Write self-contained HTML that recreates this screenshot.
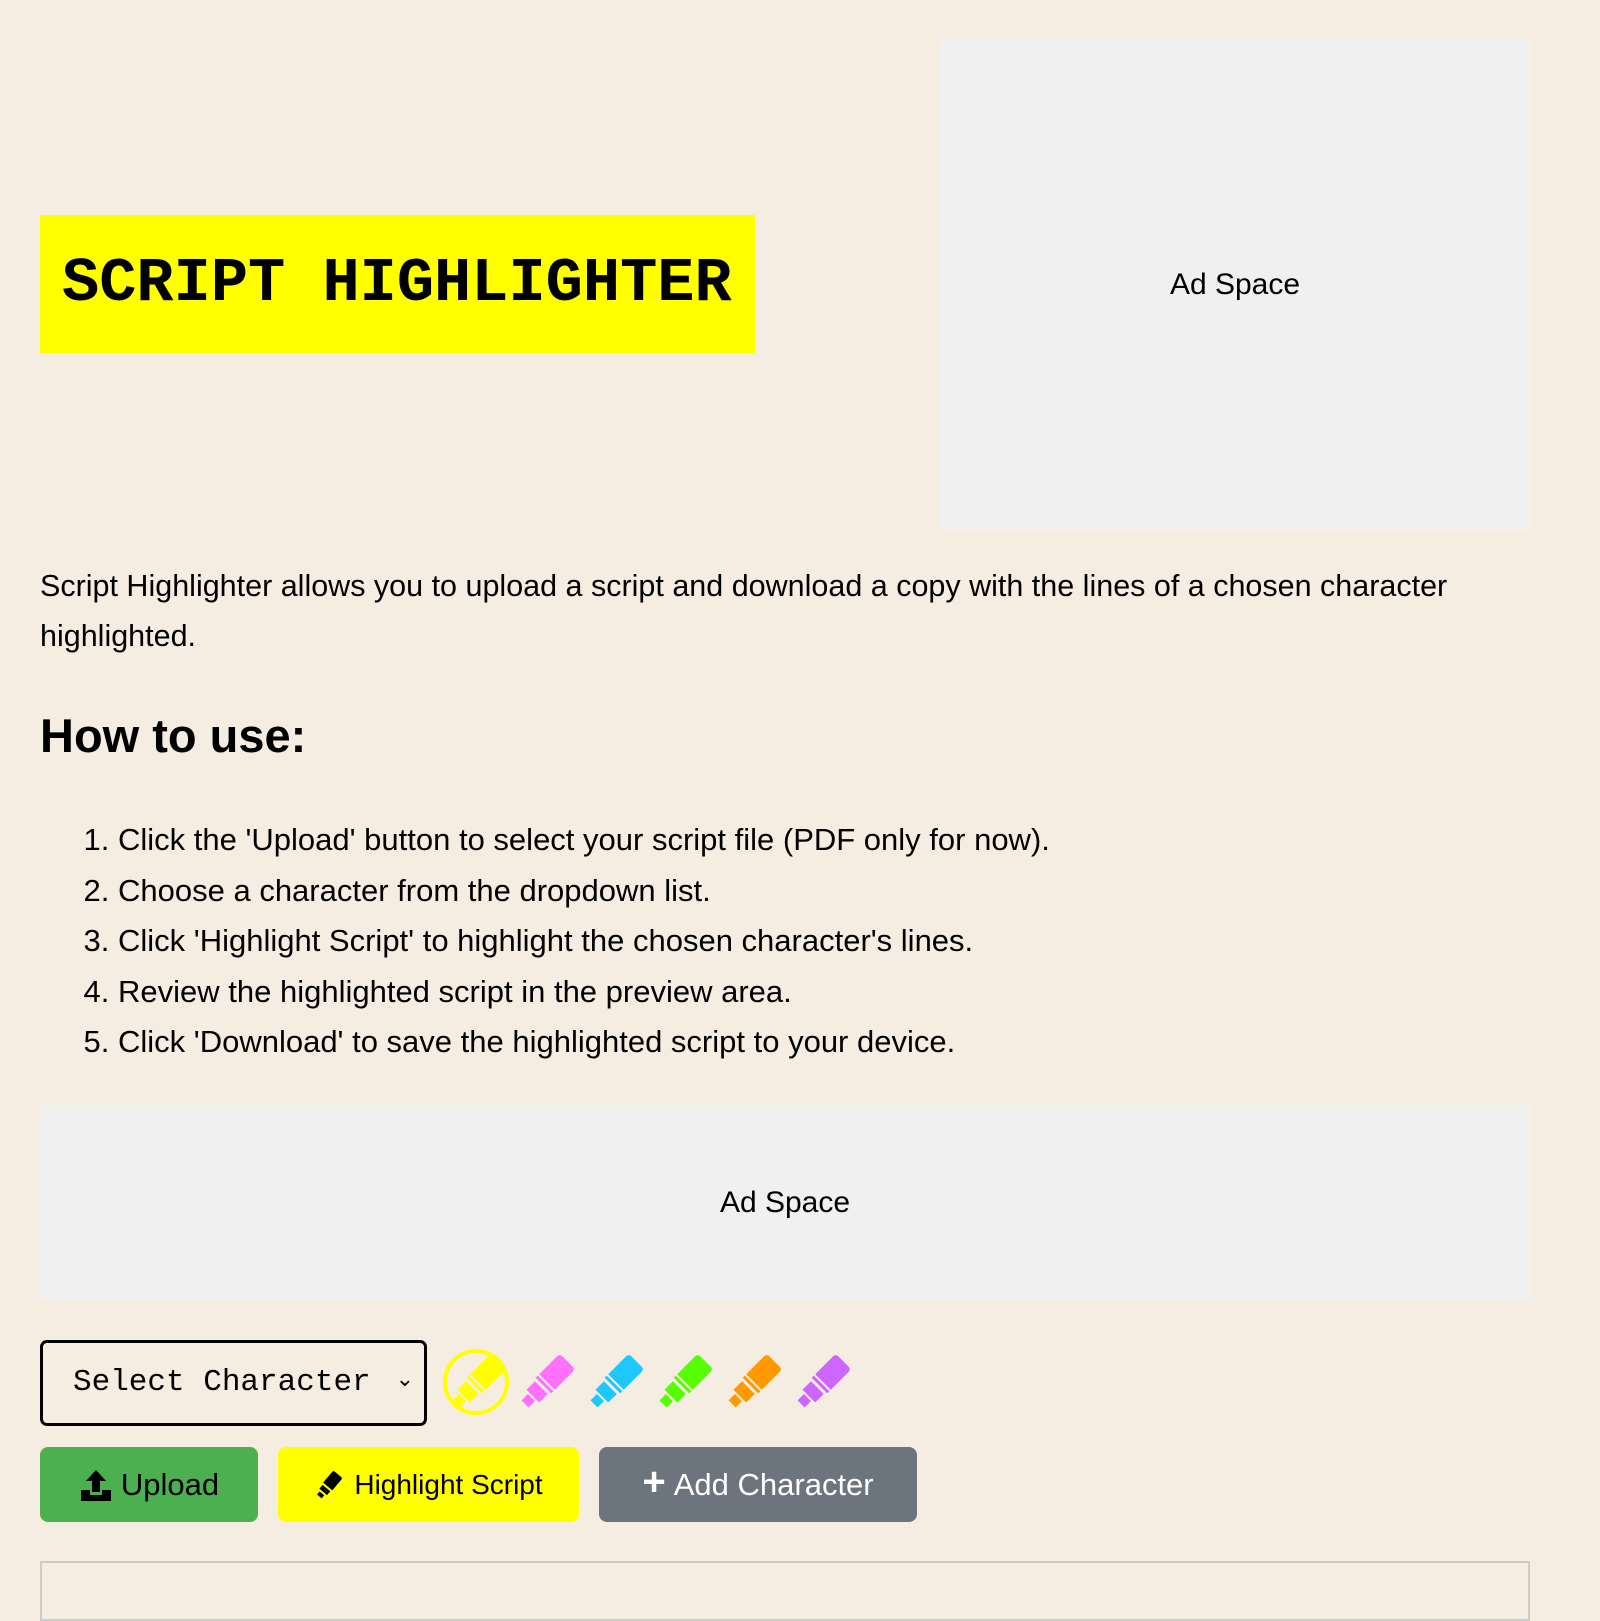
<!DOCTYPE html>
<html><head><style>
body{margin:0;background:#f5ede2;font-family:"Liberation Sans",sans-serif;color:#000;width:1600px;height:1600px;overflow:hidden;position:relative}
.a{position:absolute}
.ad{background:#f0f0f0;display:flex;align-items:center;justify-content:center;font-size:30px}
.btn{position:absolute;top:1447px;height:75px;border-radius:8px;display:flex;align-items:center;justify-content:center;font-size:31px}
li{height:50.5px;line-height:50.5px}
</style></head><body>
<div class="a" style="left:40px;top:215px;width:715px;height:138px;background:#ffff00;font-family:'Liberation Mono',monospace;font-weight:bold;font-size:62px;line-height:138px;padding-left:22px;box-sizing:border-box;white-space:nowrap">SCRIPT HIGHLIGHTER</div>
<div class="a ad" style="left:940px;top:40px;width:590px;height:490px">Ad Space</div>
<div class="a" style="left:40px;top:561px;width:1480px;font-size:30.5px;line-height:50px">Script Highlighter allows you to upload a script and download a copy with the lines of a chosen character highlighted.</div>
<div class="a" style="left:40px;top:708px;font-size:47px;font-weight:bold">How to use:</div>
<ol class="a" style="left:40px;top:815px;margin:0;padding-left:78px;font-size:31px">
<li>Click the 'Upload' button to select your script file (PDF only for now).</li>
<li>Choose a character from the dropdown list.</li>
<li>Click 'Highlight Script' to highlight the chosen character's lines.</li>
<li>Review the highlighted script in the preview area.</li>
<li>Click 'Download' to save the highlighted script to your device.</li>
</ol>
<div class="a ad" style="left:40px;top:1105px;width:1490px;height:195px">Ad Space</div>
<div class="a" style="left:40px;top:1340px;width:387px;height:86px;border:3px solid #000;border-radius:7px;box-sizing:border-box;font-family:'Liberation Mono',monospace;font-size:31px;line-height:80px;padding-left:30px;white-space:nowrap">Select Character<span style="position:absolute;right:10px;top:-4px;font-family:'Liberation Sans';font-size:22px">&#8964;</span></div>
<svg class="a" style="left:440px;top:1345px" width="420" height="75" viewBox="0 0 420 75">
<circle cx="36" cy="37" r="31" fill="none" stroke="#ffff00" stroke-width="4"/>
<defs><g id="h"><path d="M0 -11 L25 -11 Q29 -11 29 -7 L29 7 Q29 11 25 11 L0 11 Z"/><path d="M-5 -11 L-2 -11 L-2 11 L-5 11Z"/><path d="M-20 -9 L-8 -9 L-8 9 L-20 9 Z"/><path d="M-31 -5 L-22 -5 L-22 5 L-31 5Z"/></g></defs>
<g fill="#ffff00" transform="translate(38,37) rotate(-45)"><use href="#h"/></g>
<g fill="#ff70ff" transform="translate(107,37) rotate(-45)"><use href="#h"/></g>
<g fill="#1ec8ff" transform="translate(176,37) rotate(-45)"><use href="#h"/></g>
<g fill="#55ff00" transform="translate(245,37) rotate(-45)"><use href="#h"/></g>
<g fill="#ff9900" transform="translate(314,37) rotate(-45)"><use href="#h"/></g>
<g fill="#cc66ff" transform="translate(383,37) rotate(-45)"><use href="#h"/></g>
</svg>
<div class="btn" style="left:40px;width:218px;background:#4caf50"><svg width="34" height="34" viewBox="0 0 34 34" style="margin-right:8px"><path d="M17 2 L27 13 L21 13 L21 24 L13 24 L13 13 L7 13Z M2 22 L11 22 L11 27 L23 27 L23 22 L32 22 L32 33 L2 33Z"/></svg>Upload</div>
<div class="btn" style="left:278px;width:301px;background:#ffff00;font-size:28px"><svg width="30" height="30" viewBox="-15 -15 30 30" style="margin-right:10px"><g transform="rotate(-50)"><path d="M-2 -6 L12 -6 Q14 -6 14 -4 L14 4 Q14 6 12 6 L-2 6Z M-9 -5 L-4 -5 L-4 5 L-9 5Z M-15 -3 L-11 -3 L-11 3 L-15 3Z"/></g></svg>Highlight Script</div>
<div class="btn" style="left:599px;width:318px;background:#6c757d;color:#fff"><span style="font-size:40px;font-weight:bold;margin-right:8px;margin-top:-4px">+</span>Add Character</div>
<div class="a" style="left:40px;top:1561px;width:1490px;height:60px;border:2px solid #ccc;box-sizing:border-box"></div>
</body></html>
